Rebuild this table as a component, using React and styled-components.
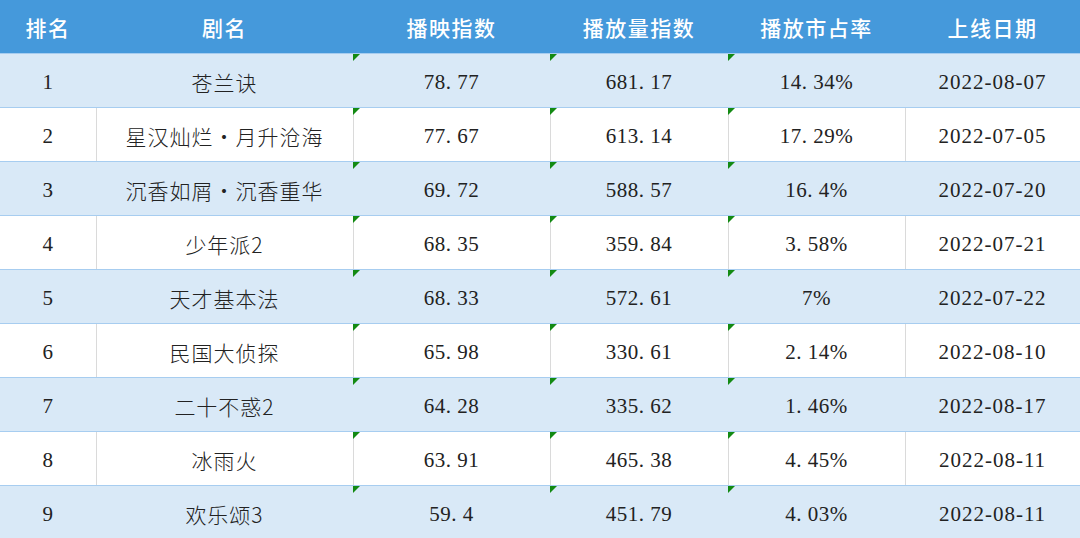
import { createGlobalStyle, styled } from "styled-components";

const GlobalStyle = createGlobalStyle`
  html, body {
    margin: 0;
    padding: 0;
    background: #ffffff;
    overflow: hidden;
  }
`;

const Table = styled.table`
  width: 1080px;
  border-collapse: collapse;
  table-layout: fixed;
  font-family: "Liberation Serif", "Noto Sans CJK SC", serif;
  color: #222;
`;

const HeadRow = styled.tr`
  height: 53px;
  background: #4599db;
`;

const HeadCell = styled.th`
  padding: 1px 0 0;
  font-family: "Noto Sans CJK SC", sans-serif;
  font-weight: 500;
  font-size: 21px;
  letter-spacing: 1.5px;
  color: #ffffff;
  text-align: center;
`;

const Row = styled.tr`
  height: 54px;
  background: ${(p) => (p.$striped ? "#d9e9f7" : "#ffffff")};
  border-top: 1px solid #a7cdf0;
  border-bottom: 1px solid #a7cdf0;
`;

const Cell = styled.td`
  position: relative;
  padding: 4px 0 0;
  border: none;
  text-align: center;
  font-size: 21px;
  letter-spacing: ${(p) => (p.$cjk ? "1px" : p.$date ? "1px" : "0.5px")};
  font-family: ${(p) =>
    p.$cjk
      ? '"Noto Sans CJK SC", sans-serif'
      : '"Liberation Serif", "Noto Sans CJK SC", serif'};
  font-weight: ${(p) => (p.$cjk ? 300 : 400)};
  box-shadow: ${(p) => (p.$striped ? "none" : "inset 1px 0 0 #dadada")};
  &:first-child {
    box-shadow: none;
  }
`;

const Flag = styled.span`
  position: absolute;
  top: 0;
  left: 0;
  width: 0;
  height: 0;
  border-top: 7px solid #138a13;
  border-right: 7px solid transparent;
`;

const columns = [
  { title: "排名", width: 96 },
  { title: "剧名", width: 257 },
  { title: "播映指数", width: 197 },
  { title: "播放量指数", width: 178 },
  { title: "播放市占率", width: 177 },
  { title: "上线日期", width: 175 },
];

const rows = [
  ["1", "苍兰诀", "78. 77", "681. 17", "14. 34%", "2022-08-07"],
  ["2", "星汉灿烂・月升沧海", "77. 67", "613. 14", "17. 29%", "2022-07-05"],
  ["3", "沉香如屑・沉香重华", "69. 72", "588. 57", "16. 4%", "2022-07-20"],
  ["4", "少年派2", "68. 35", "359. 84", "3. 58%", "2022-07-21"],
  ["5", "天才基本法", "68. 33", "572. 61", "7%", "2022-07-22"],
  ["6", "民国大侦探", "65. 98", "330. 61", "2. 14%", "2022-08-10"],
  ["7", "二十不惑2", "64. 28", "335. 62", "1. 46%", "2022-08-17"],
  ["8", "冰雨火", "63. 91", "465. 38", "4. 45%", "2022-08-11"],
  ["9", "欢乐颂3", "59. 4", "451. 79", "4. 03%", "2022-08-11"],
];

const App = () => {
  return (
    <>
      <GlobalStyle />
      <Table>
        <colgroup>
          {columns.map((c) => (
            <col key={c.title} style={{ width: c.width }} />
          ))}
        </colgroup>
        <thead>
          <HeadRow>
            {columns.map((c) => (
              <HeadCell key={c.title}>{c.title}</HeadCell>
            ))}
          </HeadRow>
        </thead>
        <tbody>
          {rows.map((r, i) => {
            const striped = i % 2 === 0;
            return (
              <Row key={r[0]} $striped={striped}>
                {r.map((v, j) => (
                  <Cell
                    key={j}
                    $striped={striped}
                    $cjk={j === 1}
                    $date={j === 5}
                  >
                    {j >= 2 && j <= 4 && <Flag />}
                    {v}
                  </Cell>
                ))}
              </Row>
            );
          })}
        </tbody>
      </Table>
    </>
  );
};

export default App;
